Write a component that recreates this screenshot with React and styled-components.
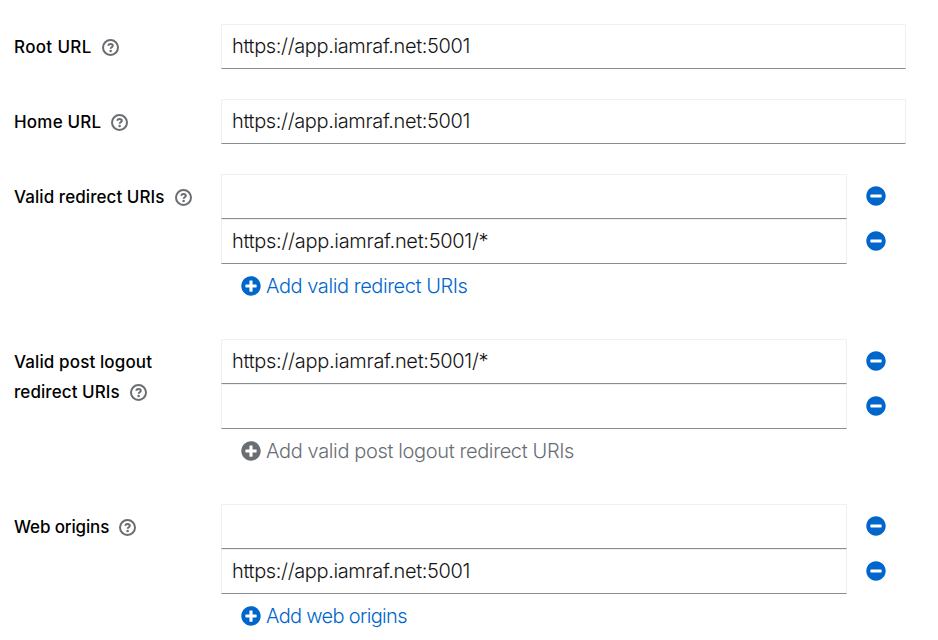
import React from "react";
import styled, { createGlobalStyle } from "styled-components";
import { FaMinusCircle, FaPlusCircle } from "react-icons/fa";

const GlobalStyle = createGlobalStyle`
  *, *::before, *::after { box-sizing: border-box; }
  body { margin: 0; background: #fff; overflow: hidden; }
`;

const Form = styled.form`
  display: flex;
  flex-direction: column;
  gap: 30px;
  width: 938px;
  height: 640px;
  padding: 24px 32px 0 14px;
  overflow: hidden;
  background: #fff;
  color: #151515;
  font-family: Inter, "Open Sans", sans-serif;
`;

const Group = styled.div`
  display: grid;
  flex: none;
  grid-template-columns: 207px 1fr;
`;

const Label = styled.div`
  padding-top: 8px;
  color: #000;
  font-size: 17px;
  font-weight: 500;
  line-height: 30px;
  white-space: nowrap;
`;

const LabelLine = styled.div`
  display: flex;
  align-items: center;
  gap: 10px;
  height: 30px;
`;

const LabelText = styled.span`
  letter-spacing: ${(p) => p.$spacing}px;
`;

const HelpSvg = styled.svg`
  flex: none;
  width: 17px;
  height: 17px;
  margin-top: 1px;
  color: #6a6e73;
`;

const Controls = styled.div`
  display: flex;
  flex-direction: column;
`;

const InputRow = styled.div`
  display: flex;
  align-items: center;
  height: 45px;
`;

const Input = styled.input`
  flex: 1;
  min-width: 0;
  height: 45px;
  padding: 0 10px 2px;
  border: 1px solid #f0f0f0;
  border-bottom-color: #8a8d90;
  border-radius: 0;
  outline: none;
  background: #fff;
  color: #151515;
  font: 300 20px/30px Inter, "Open Sans", sans-serif;
  letter-spacing: ${(p) => p.$spacing}px;
`;

const RemoveButton = styled.button`
  display: flex;
  flex: none;
  justify-content: center;
  width: 59px;
  padding: 0 1px 1px 0;
  border: 0;
  background: none;
  color: #06c;
  font-size: 20px;
`;

const AddButton = styled.button`
  display: flex;
  align-items: center;
  gap: 5px;
  align-self: flex-start;
  height: 45px;
  padding: 0 20px 1px;
  border: 0;
  background: none;
  color: ${(p) => (p.disabled ? "#6a6e73" : "#06c")};
  font: 300 20px/30px Inter, "Open Sans", sans-serif;
  letter-spacing: ${(p) => p.$spacing}px;
  white-space: nowrap;
`;

function HelpIcon() {
  return (
    <HelpSvg viewBox="0 0 17 17" fill="none" stroke="currentColor" aria-hidden="true">
      <circle cx="8.5" cy="8.5" r="7.5" strokeWidth="2" />
      <path d="M6.1 6.7C6.5 5.5 7.3 5 8.5 5c1.3 0 2.3.7 2.3 1.8 0 1.4-2.1 1.5-2.1 2.9" strokeWidth="2" />
      <circle cx="8.6" cy="12" r="1.25" fill="currentColor" stroke="none" />
    </HelpSvg>
  );
}

const FIELDS = [
  { label: [["Root URL", 0.35]], values: ["https://app.iamraf.net:5001"] },
  { label: [["Home URL", 0.2]], values: ["https://app.iamraf.net:5001"] },
  {
    label: [["Valid redirect URIs", 0.07]],
    values: ["", "https://app.iamraf.net:5001/*"],
    add: "Add valid redirect URIs",
    addSpacing: -0.43,
  },
  {
    label: [["Valid post logout", 0.12], ["redirect URIs", 0.08]],
    values: ["https://app.iamraf.net:5001/*", ""],
    add: "Add valid post logout redirect URIs",
    addSpacing: -0.37,
    disabled: true,
  },
  {
    label: [["Web origins", -0.14]],
    values: ["", "https://app.iamraf.net:5001"],
    add: "Add web origins",
    addSpacing: -0.68,
  },
];

export default function App() {
  return (
    <>
      <GlobalStyle />
      <Form>
        {FIELDS.map((field) => (
          <Group key={field.label[0][0]}>
            <Label>
              {field.label.map(([text, spacing], i) => (
                <LabelLine key={text}>
                  <LabelText $spacing={spacing}>{text}</LabelText>
                  {i === field.label.length - 1 && <HelpIcon />}
                </LabelLine>
              ))}
            </Label>
            <Controls>
              {field.values.map((value, i) => (
                <InputRow key={i}>
                  <Input
                    defaultValue={value}
                    $spacing={value.endsWith("*") ? -0.3 : -0.37}
                    spellCheck={false}
                  />
                  {field.add && (
                    <RemoveButton type="button" aria-label="Remove">
                      <FaMinusCircle />
                    </RemoveButton>
                  )}
                </InputRow>
              ))}
              {field.add && (
                <AddButton type="button" disabled={field.disabled} $spacing={field.addSpacing}>
                  <FaPlusCircle />
                  {field.add}
                </AddButton>
              )}
            </Controls>
          </Group>
        ))}
      </Form>
    </>
  );
}
